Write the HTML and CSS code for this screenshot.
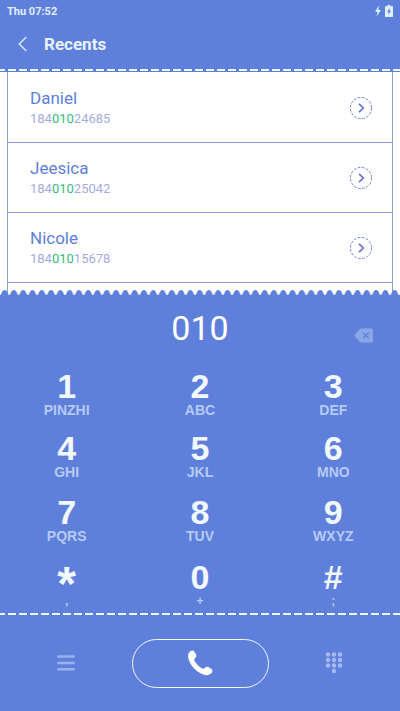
FILE: index.html
```html
<!DOCTYPE html>
<html lang="en">
<head>
<meta charset="utf-8">
<meta name="viewport" content="width=device-width, initial-scale=1">
<title>Recents</title>
<link rel="stylesheet" href="styles.css">
</head>
<body>
<svg class="defs" width="0" height="0" aria-hidden="true">
  <symbol id="go" viewBox="0 0 24 24">
    <circle cx="12" cy="12" r="10.6" fill="none" stroke="currentColor" stroke-width=".9" stroke-dasharray="2.8 1.4"/>
    <path d="M10 7.800 14.300 12 10 16.200" fill="none" stroke="currentColor" stroke-width="1.700"/>
  </symbol>
</svg>
<div class="phone">
  <header class="top">
    <div class="status">
      <span>Thu 07:52</span>
      <span class="status-icons">
        <svg width="8" height="12" viewBox="0 0 8 12" aria-hidden="true"><path d="M5 .5 1 6.8h2.6L2.6 11.5 7 5H4.4z" fill="currentColor"/></svg>
        <svg width="8" height="12" viewBox="0 0 8 12" aria-hidden="true"><path d="M2.5 0h3v1.2H8V12H0V1.200h2.500z" fill="currentColor"/><path d="M4.900 2.800 2 7h1.600l-.6 3L6.100 5.800H4.400z" fill="#5e80da"/></svg>
      </span>
    </div>
    <div class="title">
      <button class="back" aria-label="Back"><svg width="9" height="16" viewBox="0 0 9 16" aria-hidden="true"><path d="M8.300 1 1.200 8l7.100 7" fill="none" stroke="currentColor" stroke-width="1.300"/></svg></button>
      <h1>Recents</h1>
    </div>
    <div class="stitch stitch-top"></div>
  </header>
  <main class="recents">
    <ul class="list">
      <li><div><h2>Daniel</h2><p>184<mark>010</mark>24685</p></div><button class="go" aria-label="Details for Daniel"><svg width="24" height="24"><use href="#go"/></svg></button></li>
      <li><div><h2>Jeesica</h2><p>184<mark>010</mark>25042</p></div><button class="go" aria-label="Details for Jeesica"><svg width="24" height="24"><use href="#go"/></svg></button></li>
      <li><div><h2>Nicole</h2><p>184<mark>010</mark>15678</p></div><button class="go" aria-label="Details for Nicole"><svg width="24" height="24"><use href="#go"/></svg></button></li>
    </ul>
  </main>
  <section class="dialer">
    <svg class="scallop" height="6" aria-hidden="true">
      <defs><pattern id="wave" width="9.286" height="6" patternUnits="userSpaceOnUse"><path d="M0 5C1.800 4.800 1.600 0 4.643 0S7.500 4.800 9.286 5V6H0z" fill="#5e80da"/></pattern></defs>
      <rect width="100%" height="6" fill="url(#wave)"/>
    </svg>
    <div class="panel">
    <div class="entry">
      <output>010</output>
      <button class="erase" aria-label="Delete"><svg width="21" height="15" viewBox="0 0 21 16" aria-hidden="true"><path d="M.5 8 6 1.600Q7 .5 8.500.5H19Q20.500.5 20.500 2V14Q20.500 15.500 19 15.500H8.500Q7 15.500 6 14.400z" fill="#8ba6e6"/><path d="m10 5 6 6m0-6-6 6" stroke="#5e80da" stroke-width="1.500"/></svg></button>
    </div>
    <div class="keys">
      <button><b>1</b><span>PINZHI</span></button>
      <button><b>2</b><span>ABC</span></button>
      <button><b>3</b><span>DEF</span></button>
      <button><b>4</b><span>GHI</span></button>
      <button><b>5</b><span>JKL</span></button>
      <button><b>6</b><span>MNO</span></button>
      <button><b>7</b><span>PQRS</span></button>
      <button><b>8</b><span>TUV</span></button>
      <button><b>9</b><span>WXYZ</span></button>
      <button class="sym"><b class="star">*</b><span>,</span></button>
      <button class="sym"><b>0</b><span>+</span></button>
      <button class="sym"><b>#</b><span>;</span></button>
    </div>
    <div class="stitch"></div>
    <div class="actions">
      <button aria-label="Menu"><svg width="18" height="16" viewBox="0 0 18 16" aria-hidden="true"><path d="M1.300 1.500h15.400M1.300 8h15.400M1.300 14.200h15.400" stroke="#9ab3ed" stroke-width="2.500" stroke-linecap="round"/></svg></button>
      <button class="call" aria-label="Call"><svg width="26" height="26" viewBox="0 0 26 26" aria-hidden="true"><path d="M3.200 1.200C4.700 0 6.500.3 7.500 1.800L9 4.600C9.700 6 9.300 7.200 8.200 8.100 7.100 9 7 9.800 7.500 10.800 9.200 14 12 16.800 15.200 18.500 16.200 19 17 18.900 17.900 17.800 18.900 16.700 20 16.300 21.400 17L24.200 18.700C25.700 19.700 25.900 21.400 24.800 22.800 22.600 25.500 19.200 25.800 15.500 24.300 9 21.500 3.700 15.700 1.700 9.500.5 5.800 1 3 3.200 1.200Z" fill="#fff"/></svg></button>
      <button aria-label="Keypad"><svg width="18" height="22" viewBox="0 0 18 22" aria-hidden="true"><g fill="#a5bbef"><circle cx="3" cy="2.500" r="2.200"/><circle cx="9" cy="2.500" r="2.200"/><circle cx="15" cy="2.500" r="2.200"/><circle cx="3" cy="8" r="2.200"/><circle cx="9" cy="8" r="2.200"/><circle cx="15" cy="8" r="2.200"/><circle cx="3" cy="13.500" r="2.200"/><circle cx="9" cy="13.500" r="2.200"/><circle cx="15" cy="13.500" r="2.200"/><circle cx="9" cy="19" r="2.200"/></g></svg></button>
    </div>
    </div>
  </section>
</div>
</body>
</html>
```
FILE: styles.css
```css
* { box-sizing: border-box; margin: 0; padding: 0; }
body { background: #fff; font-family: Roboto, sans-serif; }
button { border: 0; background: none; color: inherit; font: inherit; cursor: pointer; }
svg { display: block; }
.defs { position: absolute; }
.phone { display: flex; flex-direction: column; min-height: 100vh; }

.top { background: #5e80da; color: #e0f0ff; padding-bottom: 1px; }
.status { display: flex; justify-content: space-between; align-items: center; height: 22px; padding: 0 7px; font-size: 11px; font-weight: 700; }
.status-icons { display: flex; gap: 3px; }
.title { display: flex; align-items: center; gap: 17px; height: 44px; padding-left: 18px; }
.title h1 { font-size: 17px; font-weight: 700; color: #e8f2ff; }
.back { height: 44px; }
.stitch { height: 2px; background: repeating-linear-gradient(90deg, #f0f8ff 0 8px, transparent 8px 11px) -3px 0 / calc(100% + 3px) 100%; }
.stitch-top { margin-top: 3px; }

.recents { display: flex; flex: 1; padding: 0 7px; }
.list { flex: 1; list-style: none; border: solid #8c9bd8; border-width: 0 1px; }
.list li { display: flex; justify-content: space-between; align-items: center; height: 70px; padding: 1px 19px 0 22px; border-bottom: 1px solid #8c9bd8; }
.list li:first-child { height: 71px; }
.list h2 { font-size: 17px; font-weight: 400; line-height: 22px; color: #5e80da; }
.list p { font-size: 13px; line-height: 20px; color: #a5abe2; }
.list mark { background: none; color: #2fbd7c; }
.go { color: #6676cf; }

.dialer { color: #f2f8ff; margin-top: -6px; }
.panel { background: #5e80da; }
.scallop { width: 100%; }
.entry { display: grid; grid-template-columns: 1fr auto 1fr; align-items: center; height: 73px; padding: 0 26px; }
.entry output { grid-column: 2; font-size: 34px; line-height: 64px; color: #fff; align-self: start; }
.erase { justify-self: end; margin-top: 6px; }
.keys { display: grid; grid-template-columns: repeat(3, 1fr); grid-template-rows: 62px 64px 65px 53px; font-family: "Liberation Sans", sans-serif; }
.keys button { display: flex; flex-direction: column; align-items: center; justify-content: flex-start; }
.keys b { height: 33px; font-size: 34px; line-height: 34px; }
.keys span { font-size: 14px; line-height: 16px; font-weight: 700; color: #b5cbf5; }
.keys .sym span { font-size: 12px; }
.keys .star { font-size: 48px; line-height: 48px; }
.actions { display: grid; grid-template-columns: 1fr 137px 1fr; align-items: center; height: 96px; }
.actions button { display: flex; justify-content: center; align-items: center; height: 49px; }
.actions .call { border: 1px solid #f2f8ff; border-radius: 25px; }
```
